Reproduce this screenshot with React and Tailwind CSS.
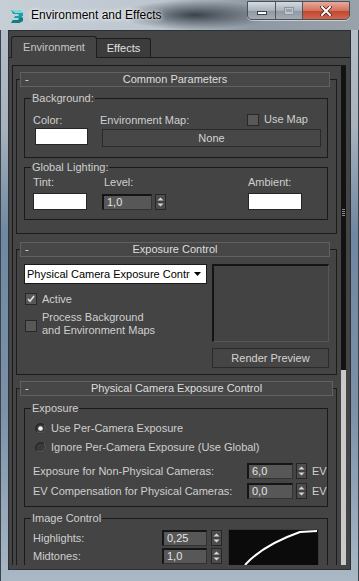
import React from 'react';

// 3ds Max style dialog: Environment and Effects

const Logo = () => (
  <svg width="15" height="14" viewBox="0 0 15 14" className="shrink-0">
    <path d="M1 1h8l4 3v3l-2 1 2 1v3l-4 2H1l2-3h5l1-1-1-1H4l1-2h3l1-1-1-1H3z" fill="#1b9fa6" />
    <path d="M1 1h8l4 3H5z" fill="#74dcdc" />
    <path d="M11 8l2 1v3l-4 2H1l2-3h5z" fill="#137d86" />
  </svg>
);

const WinButtons = () => (
  <div className="absolute top-[1px] right-[9px] flex h-[19px] border border-[#48505a] rounded-b-[5px] overflow-hidden shadow-[0_1px_0_rgba(255,255,255,0.5)]">
    <div className="w-[28px] flex items-center justify-center bg-[linear-gradient(to_bottom,#d5dae0,#aab2bb_50%,#8f98a2_51%,#a3acb5)] border-r border-[#4d555e]">
      <div className="mt-[5px] w-[10px] h-[4px] bg-white border border-[#3a4048]" />
    </div>
    <div className="w-[27px] flex items-center justify-center bg-[linear-gradient(to_bottom,#d5dae0,#aab2bb_50%,#8f98a2_51%,#a3acb5)] border-r border-[#4d555e]">
      <div className="w-[10px] h-[8px] border border-[#8c949c] bg-[#c0c6cc] flex items-center justify-center">
        <div className="w-[6px] h-[3px] bg-[#9aa2aa]" />
      </div>
    </div>
    <div className="w-[46px] flex items-center justify-center bg-[linear-gradient(to_bottom,#e9a99a,#d4735f_50%,#c2452e_51%,#d0664c)]">
      <svg width="12" height="10" viewBox="0 0 12 10">
        <path d="M2 1l8 8M10 1l-8 8" stroke="#4a2018" strokeWidth="3.6" strokeLinecap="square" />
        <path d="M2 1l8 8M10 1l-8 8" stroke="#ffffff" strokeWidth="2" strokeLinecap="square" />
      </svg>
    </div>
  </div>
);

const Rollout = ({ title, className = '', headerClass = 'mr-[6px]', children }) => (
  <div className={`ml-[3px] mr-[4px] border border-[#1c1c1c] ${className}`}>
    <div
      className={`-mt-[8px] ml-[3px] ${headerClass} h-[15px] grid grid-cols-[20px_1fr_20px] items-center bg-[#474747] border border-[#616161] text-[#dedede]`}
    >
      <span className="pl-[4px]">-</span>
      <span className="text-center">{title}</span>
      <span />
    </div>
    {children}
  </div>
);

const Group = ({ label, className = '', children }) => (
  <div className={`relative ml-[7px] mr-[8px] border border-[#1a1a1a] ${className}`}>
    <span className="absolute left-[6px] -top-[7px] px-[1px] bg-[#444444] text-[#cfcfcf]">{label}</span>
    {children}
  </div>
);

const Swatch = ({ className = '' }) => (
  <div className={`h-[17px] bg-white border border-[#262626] ${className}`} />
);

const Field = ({ value, className = '' }) => (
  <div
    className={`h-[16px] bg-[#575757] border-t-2 border-l-2 border-r border-b border-t-[#151515] border-l-[#151515] border-r-[#333333] border-b-[#333333] pl-[3px] flex items-center text-[#e4e4e4] ${className}`}
  >
    {value}
  </div>
);

const Arrows = () => (
  <svg width="11" height="16" viewBox="0 0 11 16" className="block shrink-0">
    <rect x="0.5" y="0.5" width="10" height="15" fill="#4c4c4c" stroke="#262626" />
    <path d="M2.5 6.5h6L5.5 3.5z" fill="#d6d6d6" />
    <line x1="1" y1="8" x2="10" y2="8" stroke="#383838" />
    <path d="M2.5 9.5h6L5.5 12.5z" fill="#d6d6d6" />
  </svg>
);

const Check = ({ checked }) => (
  <div className="w-[12px] h-[12px] shrink-0 bg-[#585858] border border-[#282828] flex items-center justify-center">
    {checked && (
      <svg width="8" height="8" viewBox="0 0 8 8">
        <path d="M1 4l2 2.2L7 1" stroke="#e2e2e2" strokeWidth="1.6" fill="none" />
      </svg>
    )}
  </div>
);

const Radio = ({ on }) => (
  <svg width="11" height="11" viewBox="0 0 11 11" className="shrink-0">
    <circle cx="5.5" cy="5.5" r="4.8" fill="#3a3a3a" stroke="#1c1c1c" />
    <path d="M2 8.5a4.5 4.5 0 0 0 7-6.5" stroke="#6a6a6a" fill="none" />
    {on && <circle cx="5.5" cy="5.5" r="2.3" fill="#f2f2f2" />}
  </svg>
);

const SpinRow = ({ label, value, className = '' }) => (
  <div className={`flex items-center h-[16px] pl-[8px] ${className}`}>
    <span className="w-[214px]">{label}</span>
    <Field value={value} className="w-[46px]" />
    <div className="ml-[3px]">
      <Arrows />
    </div>
    <span className="ml-[5px]">EV</span>
  </div>
);

export default function App() {
  return (
    <div className="w-[359px] h-[581px] overflow-hidden flex flex-col bg-[linear-gradient(to_bottom,#b8c1ca_0%,#a7b2bd_22%,#6f88a1_40%,#7a91a8_70%,#aab8c5_100%)] shadow-[inset_1px_0_0_#39414a,inset_-1px_0_0_#39414a] font-['Liberation_Sans',Arial,sans-serif] text-[11px] leading-[13px] text-[#cfcfcf]">
      {/* title bar */}
      <div className="relative h-[30px] shrink-0 flex items-center pl-[10px] pt-[1px] bg-[radial-gradient(75px_15px_at_195px_15px,rgba(38,45,53,0.85),rgba(38,45,53,0)),linear-gradient(to_right,#c6ced6,#bdc6cf_45%,#8f99a3_70%,#99a2ab)]">
        <Logo />
        <span className="ml-[6px] text-[12px] text-black [text-shadow:0_0_6px_#fff,0_0_3px_#fff]">
          Environment and Effects
        </span>
        <WinButtons />
      </div>

      {/* client */}
      <div className="flex-1 min-h-0 mx-[8px] mb-[11px] flex flex-col bg-[#444444] border border-[#2c3137]">
        <div className="h-[27px] shrink-0 flex items-end pl-[2px] border-b border-[#1d1d1d]">
          <div className="-mb-px h-[22px] w-[86px] flex items-center justify-center bg-[#444444] border border-b-0 border-[#1d1d1d] rounded-t-[3px] text-[#c6c6c6]">
            Environment
          </div>
          <div className="h-[19px] w-[54px] flex items-center justify-center bg-[#3c3c3c] border border-b-0 border-l-0 border-[#1d1d1d] rounded-tr-[3px] text-[#e2e2e2]">
            Effects
          </div>
        </div>

        <div className="flex-1 min-h-0 flex pt-[7px] pb-[4px] pl-[3px] pr-[4px]">
          <div className="flex-1 min-h-0 flex border-l border-t border-[#1a1a1a]">
            <div className="flex-1 min-w-0 overflow-hidden">
              {/* Common Parameters */}
              <Rollout title="Common Parameters" className="mt-[13px] pb-[13px]">
                <Group label="Background:" className="mt-[11px] h-[60px]">
                  <div className="flex pl-[8px] pt-[15px]">
                    <div className="w-[67px] flex flex-col">
                      <span>Color:</span>
                      <Swatch className="mt-[1px] ml-[2px] w-[53px]" />
                    </div>
                    <div className="flex-1 flex flex-col pr-[6px]">
                      <div className="flex items-center h-[13px]">
                        <span>Environment Map:</span>
                        <div className="ml-auto mr-[13px] -mt-[2px] flex items-center gap-[5px]">
                          <Check />
                          <span>Use Map</span>
                        </div>
                      </div>
                      <div className="mt-[2px] ml-[2px] h-[18px] bg-[#474747] border border-[#2a2a2a] flex items-center justify-center text-[#d4d4d4]">
                        None
                      </div>
                    </div>
                  </div>
                </Group>

                <Group label="Global Lighting:" className="mt-[9px] h-[53px]">
                  <div className="flex pl-[8px] pt-[8px]">
                    <div className="w-[69px] flex flex-col">
                      <span>Tint:</span>
                      <Swatch className="mt-[4px] w-[54px]" />
                    </div>
                    <div className="w-[146px] flex flex-col">
                      <span className="pl-[2px]">Level:</span>
                      <div className="mt-[5px] flex items-center gap-[3px]">
                        <Field value="1,0" className="w-[50px]" />
                        <Arrows />
                      </div>
                    </div>
                    <div className="flex flex-col">
                      <span>Ambient:</span>
                      <Swatch className="mt-[4px] w-[54px]" />
                    </div>
                  </div>
                </Group>
              </Rollout>

              {/* Exposure Control */}
              <Rollout title="Exposure Control" className="mt-[15px]">
                <div className="flex ml-[7px] mt-[7px] pb-[6px]">
                  <div className="w-[183px] flex flex-col">
                    <div className="h-[20px] flex items-center bg-white border border-[#1a1a1a] pl-[2px]">
                      <span className="flex-1 overflow-hidden whitespace-nowrap text-black">
                        Physical Camera Exposure Control
                      </span>
                      <svg width="16" height="8" viewBox="0 0 16 8" className="shrink-0">
                        <path d="M4 2h7L7.5 6z" fill="#000" />
                      </svg>
                    </div>
                    <div className="mt-[9px] ml-[1px] flex items-center gap-[5px] h-[12px]">
                      <Check checked />
                      <span>Active</span>
                    </div>
                    <div className="mt-[6px] ml-[1px] flex items-start gap-[5px]">
                      <div className="mt-[9px]">
                        <Check />
                      </div>
                      <span>
                        Process Background
                        <br />
                        and Environment Maps
                      </span>
                    </div>
                  </div>
                  <div className="ml-[5px] w-[117px] flex flex-col">
                    <div className="h-[78px] bg-[#434343] border-t-2 border-l-2 border-r border-b border-t-[#141414] border-l-[#141414] border-r-[#575757] border-b-[#575757]" />
                    <div className="mt-[6px] h-[20px] bg-[#454545] border border-[#2a2a2a] flex items-center justify-center text-[#d4d4d4]">
                      Render Preview
                    </div>
                  </div>
                </div>
              </Rollout>

              {/* Physical Camera Exposure Control */}
              <Rollout title="Physical Camera Exposure Control" className="mt-[13px] pb-[20px]" headerClass="mr-[3px]">
                <Group label="Exposure" className="mt-[12px] h-[99px]">
                  <div className="flex flex-col pt-[12px]">
                    <div className="flex items-center h-[15px] pl-[10px] gap-[5px]">
                      <Radio on />
                      <span>Use Per-Camera Exposure</span>
                    </div>
                    <div className="mt-[4px] flex items-center h-[15px] pl-[10px] gap-[5px]">
                      <Radio />
                      <span>Ignore Per-Camera Exposure (Use Global)</span>
                    </div>
                    <SpinRow label="Exposure for Non-Physical Cameras:" value="6,0" className="mt-[8px]" />
                    <SpinRow label="EV Compensation for Physical Cameras:" value="0,0" className="mt-[4px]" />
                  </div>
                </Group>

                <Group label="Image Control" className="mt-[11px] h-[70px]">
                  <div className="flex items-start pl-[8px]">
                    <div className="flex flex-col pt-[11px]">
                      <div className="flex items-center h-[16px]">
                        <span className="w-[129px]">Highlights:</span>
                        <Field value="0,25" className="w-[45px]" />
                        <div className="ml-[4px]">
                          <Arrows />
                        </div>
                      </div>
                      <div className="mt-[2px] flex items-center h-[16px]">
                        <span className="w-[129px]">Midtones:</span>
                        <Field value="1,0" className="w-[45px]" />
                        <div className="ml-[4px]">
                          <Arrows />
                        </div>
                      </div>
                    </div>
                    <svg width="91" height="42" viewBox="0 0 91 42" className="ml-[6px] mt-[10px] shrink-0 block">
                      <rect x="0" y="0" width="91" height="42" fill="#0b0b0b" />
                      <rect x="0.5" y="0.5" width="90" height="41" fill="none" stroke="#3a3a3a" />
                      <path d="M17 36Q35 16 72 3L89 2" stroke="#ffffff" strokeWidth="2" fill="none" />
                    </svg>
                  </div>
                </Group>
              </Rollout>
            </div>

            {/* scrollbar */}
            <div className="w-[5px] shrink-0 flex flex-col">
              <div className="h-[304px] bg-[#121212] flex flex-col items-center justify-center gap-[1px] pb-[12px]">
                <div className="w-[3px] h-[1px] bg-[#8a8a8a]" />
                <div className="w-[3px] h-[1px] bg-[#8a8a8a]" />
                <div className="w-[3px] h-[1px] bg-[#8a8a8a]" />
                <div className="w-[3px] h-[1px] bg-[#8a8a8a]" />
              </div>
              <div className="flex-1 bg-[#c9c9c9]" />
            </div>
          </div>
        </div>
      </div>
    </div>
  );
}
